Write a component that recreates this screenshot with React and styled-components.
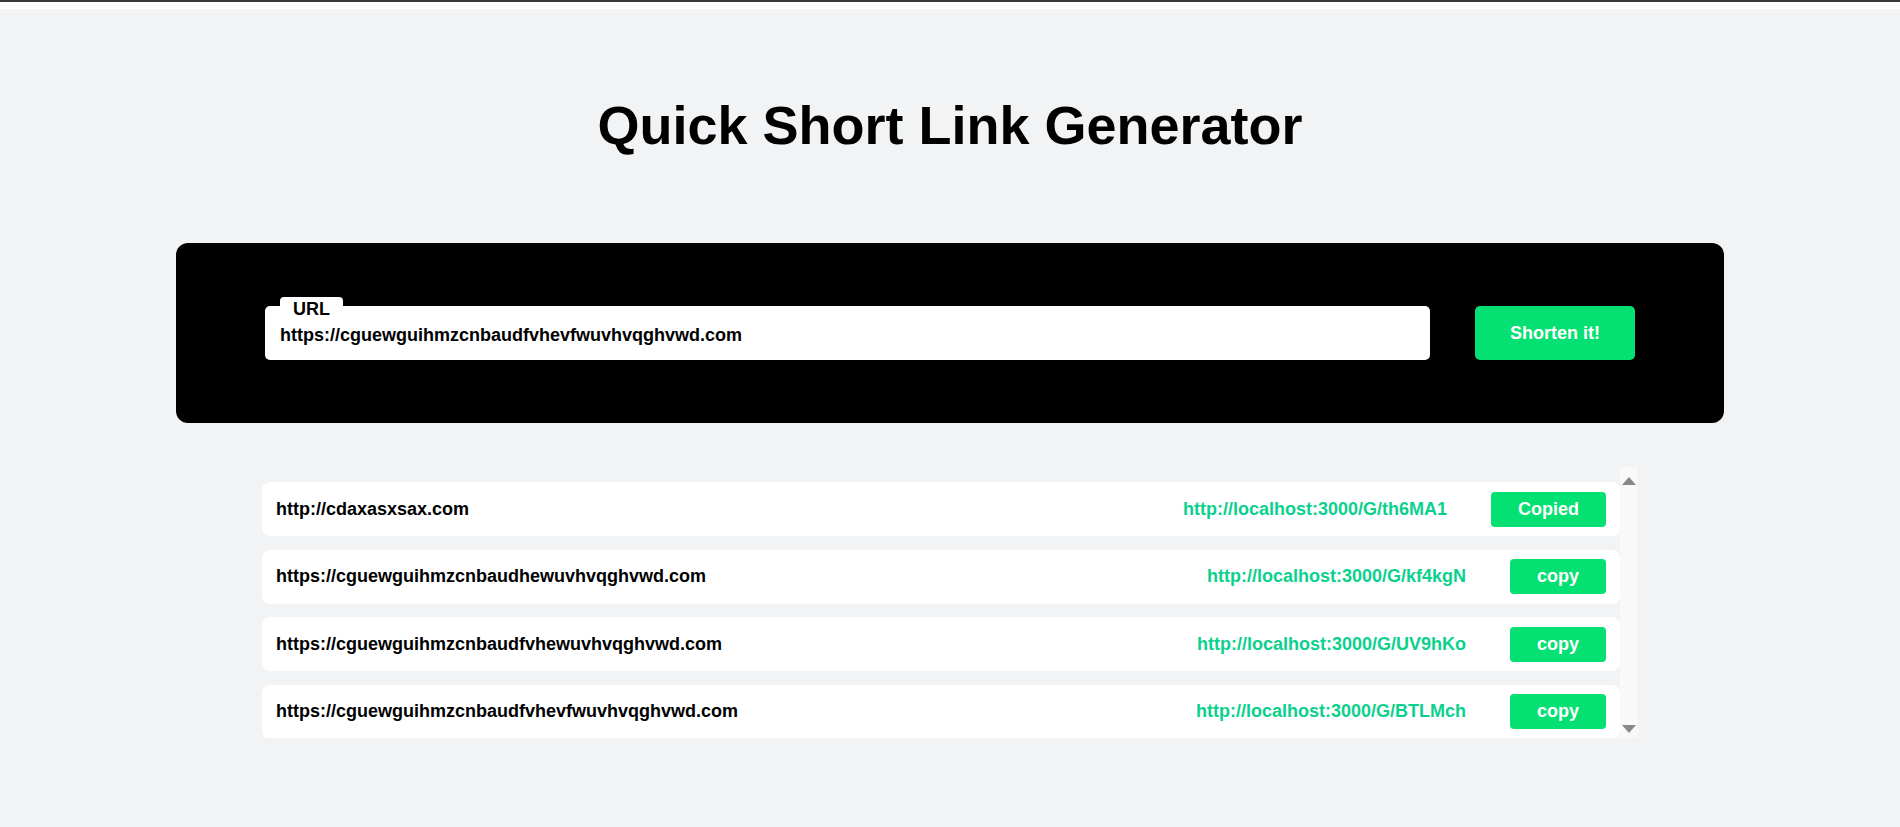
import styled, { createGlobalStyle } from "styled-components";

const GlobalStyle = createGlobalStyle`
  html {
    background: #ffffff;
  }
  body {
    margin: 0;
    border-top: 2px solid #3a3a3a;
    padding-top: 7px;
    font-family: "Liberation Sans", Arial, sans-serif;
  }
`;

const Page = styled.div`
  background: #f2f3f5;
  min-height: 818px;
  padding-top: 85px;
  box-sizing: border-box;
`;

const Title = styled.h1`
  margin: 0;
  text-align: center;
  font-size: 54px;
  font-weight: 700;
  line-height: 62px;
  color: #000;
`;

const Panel = styled.div`
  margin: 87px 176px 0;
  height: 180px;
  background: #000;
  border-radius: 12px;
  padding: 0 89px;
  display: flex;
  align-items: center;
  gap: 45px;
`;

const Field = styled.div`
  position: relative;
  flex: 1;
`;

const Label = styled.label`
  position: absolute;
  top: -9px;
  left: 15px;
  background: #fff;
  border-radius: 4px 4px 0 0;
  padding: 2px 13px 0;
  font-size: 18px;
  font-weight: 700;
  line-height: 20px;
  color: #000;
`;

const Input = styled.input`
  display: block;
  width: 100%;
  box-sizing: border-box;
  height: 54px;
  border: none;
  outline: none;
  border-radius: 5px;
  background: #fff;
  padding: 4px 15px 0;
  font-family: inherit;
  font-size: 18px;
  font-weight: 700;
  color: #000;
`;

const ShortenButton = styled.button`
  width: 160px;
  height: 54px;
  border: none;
  border-radius: 5px;
  background: #05e072;
  color: #fff;
  font-family: inherit;
  font-size: 18px;
  font-weight: 700;
  cursor: pointer;
`;

const ListWrap = styled.div`
  width: 1376px;
  height: 271px;
  margin: 44px auto 0;
  display: flex;
`;

const List = styled.div`
  flex: 1;
  display: flex;
  flex-direction: column;
  gap: 13.5px;
  padding-top: 15px;
  overflow: hidden;
`;

const Row = styled.div`
  flex: 0 0 54px;
  display: flex;
  align-items: center;
  background: #fff;
  border-radius: 8px;
  padding: 0 14px;
  font-size: 18px;
  font-weight: 700;
`;

const LongUrl = styled.span`
  flex: 1;
  color: #000;
`;

const ShortUrl = styled.span`
  color: #0bd18d;
  margin-right: 44px;
`;

const CopyButton = styled.button`
  height: 35px;
  padding: 0 27px;
  border: none;
  border-radius: 4px;
  background: #05e072;
  color: #fff;
  font-family: inherit;
  font-size: 18px;
  font-weight: 700;
  cursor: pointer;
`;

const ScrollBar = styled.div`
  width: 18px;
  background: #f9f9f9;
  display: flex;
  flex-direction: column;
  align-items: center;
  justify-content: space-between;
  padding: 10px 0 5px;
  box-sizing: border-box;
`;

const Arrow = styled.div`
  width: 0;
  height: 0;
  border-left: 7px solid transparent;
  border-right: 7px solid transparent;
  ${(p) =>
    p.down
      ? "border-top: 8px solid #888888;"
      : "border-bottom: 8px solid #888888;"}
`;

const links = [
  { long: "http://cdaxasxsax.com", short: "http://localhost:3000/G/th6MA1", copied: true },
  { long: "https://cguewguihmzcnbaudhewuvhvqghvwd.com", short: "http://localhost:3000/G/kf4kgN" },
  { long: "https://cguewguihmzcnbaudfvhewuvhvqghvwd.com", short: "http://localhost:3000/G/UV9hKo" },
  { long: "https://cguewguihmzcnbaudfvhevfwuvhvqghvwd.com", short: "http://localhost:3000/G/BTLMch" },
];

const App = () => {
  return (
    <Page>
      <GlobalStyle />
      <Title>Quick Short Link Generator</Title>
      <Panel>
        <Field>
          <Label>URL</Label>
          <Input defaultValue="https://cguewguihmzcnbaudfvhevfwuvhvqghvwd.com" />
        </Field>
        <ShortenButton>Shorten it!</ShortenButton>
      </Panel>
      <ListWrap>
        <List>
          {links.map((l) => (
            <Row key={l.short}>
              <LongUrl>{l.long}</LongUrl>
              <ShortUrl>{l.short}</ShortUrl>
              <CopyButton>{l.copied ? "Copied" : "copy"}</CopyButton>
            </Row>
          ))}
        </List>
        <ScrollBar>
          <Arrow />
          <Arrow down />
        </ScrollBar>
      </ListWrap>
    </Page>
  );
};

export default App;
